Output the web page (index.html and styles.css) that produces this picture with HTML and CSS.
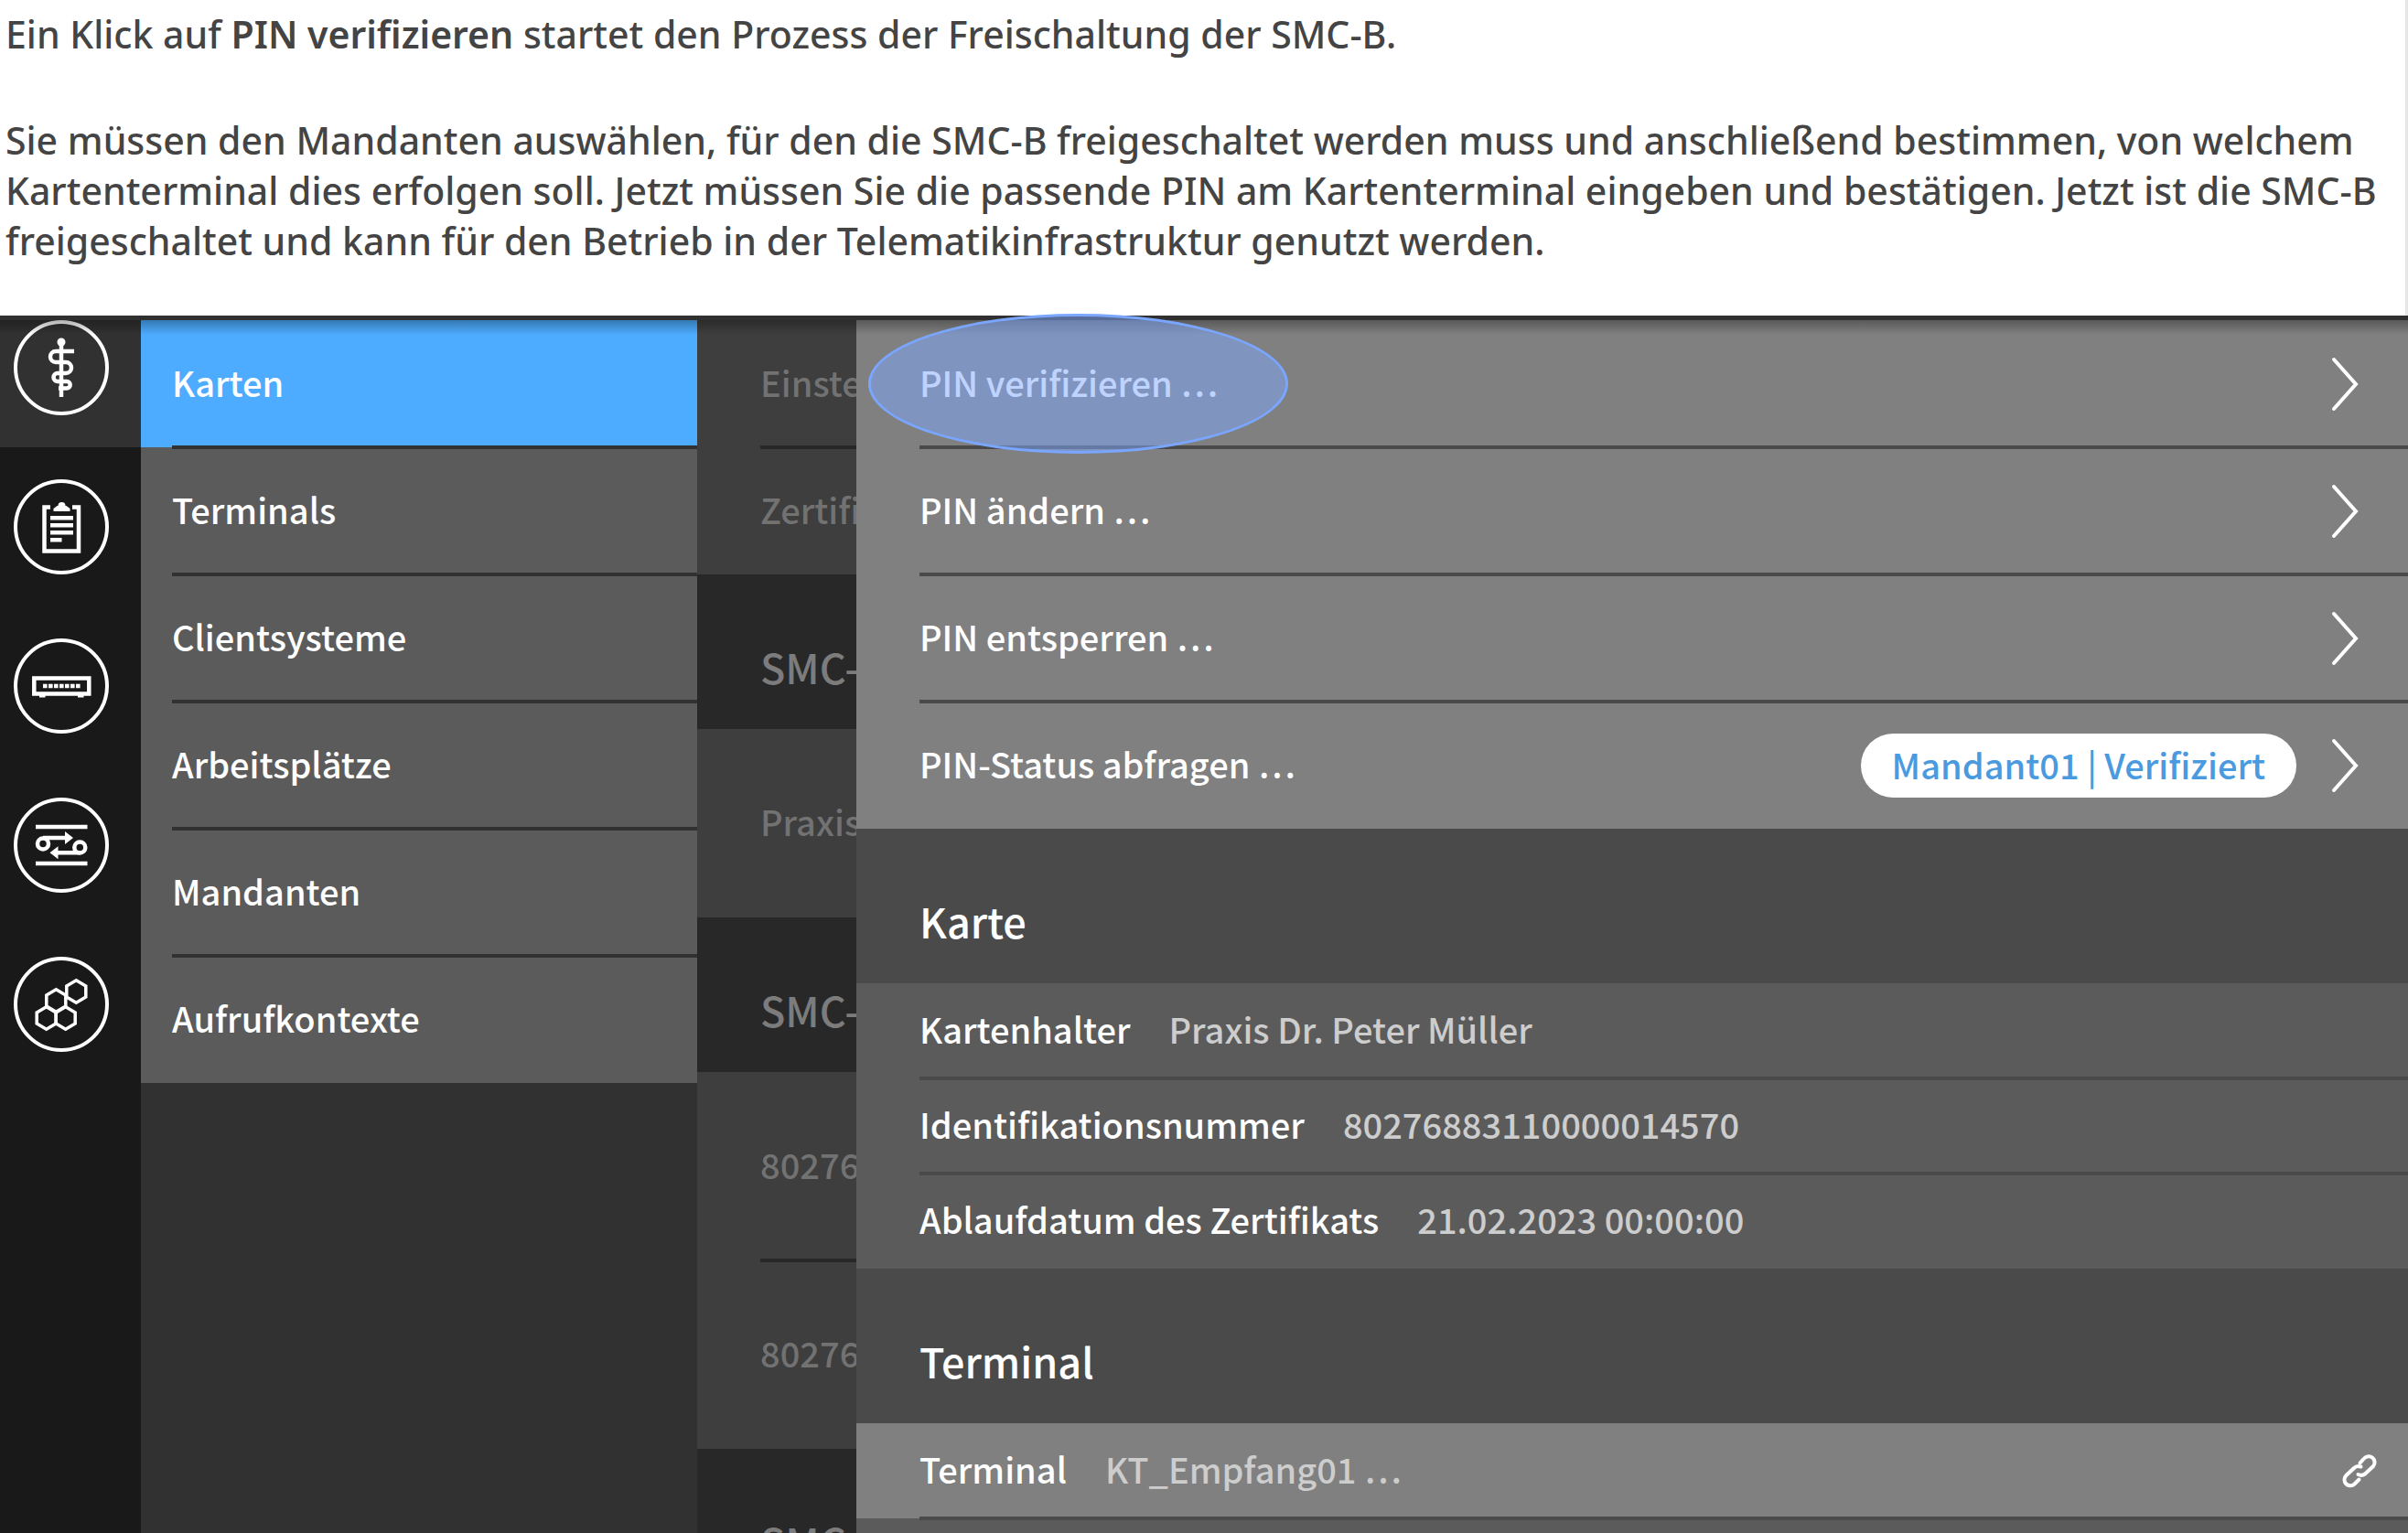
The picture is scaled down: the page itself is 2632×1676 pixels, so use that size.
FILE: index.html
```html
<!DOCTYPE html>
<html lang="de">
<head>
<meta charset="utf-8">
<title>PIN verifizieren</title>
<link rel="stylesheet" href="styles.css">
</head>
<body>
<section class="intro">
  <p>Ein Klick auf <strong>PIN verifizieren</strong> startet den Prozess der Freischaltung der SMC-B.</p>
  <p>Sie müssen den Mandanten auswählen, für den die SMC-B freigeschaltet werden muss und anschließend bestimmen, von welchem Kartenterminal dies erfolgen soll. Jetzt müssen Sie die passende PIN am Kartenterminal eingeben und bestätigen. Jetzt ist die SMC-B freigeschaltet und kann für den Betrieb in der Telematikinfrastruktur genutzt werden.</p>
</section>

<main class="app">
  <nav class="rail" aria-label="Bereiche">
    <a class="rail-item active" href="#praxis" aria-label="Praxis">
      <svg class="rail-icon" viewBox="0 0 104 104">
        <circle cx="52" cy="52" r="50"/>
        <g class="bold"><path d="M52 23V84"/><path d="M66 34H46a6 6 0 0 0 0 12H57a6 6 0 0 1 0 12H48a4.500 4.500 0 0 0 0 9H58a3.700 3.700 0 0 1 0 7.400H49"/></g>
        <circle class="solid" cx="52" cy="24" r="4.500"/>
      </svg>
    </a>
    <a class="rail-item" href="#protokoll" aria-label="Protokoll">
      <svg class="rail-icon" viewBox="0 0 104 104">
        <circle cx="52" cy="52" r="50"/>
        <g class="bold"><path d="M40 30.500H33.500V78.500H71V30.500H64"/><path d="M40 42.300H65M40 50.300H65M40 58.300H65M40 66.300H52.500"/></g>
        <path class="solid" d="M43.500 35v-3l4-3h1a4 4 0 0 1 8 0h1l4 3v3z"/>
      </svg>
    </a>
    <a class="rail-item" href="#system" aria-label="System">
      <svg class="rail-icon" viewBox="0 0 104 104">
        <circle cx="52" cy="52" r="50"/>
        <rect class="bold" x="22.300" y="43.500" width="60" height="17"/>
        <path class="bold" stroke-dasharray="4.600 1.400" d="M32 52H73.500"/>
        <path class="solid" d="M28 62h6.500v2.500h-6.500zM70 62h6.500v2.500h-6.500z"/>
      </svg>
    </a>
    <a class="rail-item" href="#netzwerk" aria-label="Netzwerk">
      <svg class="rail-icon" viewBox="0 0 104 104">
        <circle cx="52" cy="52" r="50"/>
        <g class="bold"><path d="M24 32H80.500M24 72H80.500M32 44H58M72.500 60.300H46"/><circle cx="32" cy="50.500" r="6"/><circle cx="72.300" cy="54.500" r="6"/></g>
        <path class="solid" d="M56 37l9 7-9 7zM48.500 53.300l-9 7 9 7z"/>
      </svg>
    </a>
    <a class="rail-item" href="#module" aria-label="Module">
      <svg class="rail-icon" viewBox="0 0 104 104">
        <circle cx="52" cy="52" r="50"/>
        <g class="cells"><path d="M68.300 25.800l10.500 6.100v12.200l-10.500 6.100-10.500-6.100v-12.200z"/><path d="M46.300 35.800l10.500 6.100v12.200l-10.500 6.100-10.500-6.100v-12.200z"/><path d="M35.700 54.800l10.500 6.100v12.200l-10.500 6.100-10.500-6.100v-12.200z"/><path d="M56.700 54.800l10.500 6.100v12.200l-10.500 6.100-10.500-6.100v-12.200z"/></g>
      </svg>
    </a>
  </nav>

  <nav class="menu" aria-label="Praxis">
    <a class="row tall active" href="#karten">Karten</a>
    <a class="row tall" href="#terminals">Terminals</a>
    <a class="row tall" href="#clientsysteme">Clientsysteme</a>
    <a class="row tall" href="#arbeitsplaetze">Arbeitsplätze</a>
    <a class="row tall" href="#mandanten">Mandanten</a>
    <a class="row tall" href="#aufrufkontexte">Aufrufkontexte</a>
  </nav>

  <section class="cards">
    <div class="row tall">Einste</div>
    <div class="row tall">Zertifi</div>
    <h2 class="head">SMC-</h2>
    <div class="row double">Praxis</div>
    <h2 class="head">SMC-</h2>
    <div class="row double">80276</div>
    <div class="row double">80276</div>
    <h2 class="head">SMC-</h2>
  </section>

  <section class="detail">
    <div class="actions">
      <button class="row tall" type="button">PIN verifizieren …
        <svg class="chevron" viewBox="0 0 30 60"><path d="M3 3L27 30L3 57"/></svg>
        <span class="marker"></span>
      </button>
      <button class="row tall" type="button">PIN ändern …
        <svg class="chevron" viewBox="0 0 30 60"><path d="M3 3L27 30L3 57"/></svg>
      </button>
      <button class="row tall" type="button">PIN entsperren …
        <svg class="chevron" viewBox="0 0 30 60"><path d="M3 3L27 30L3 57"/></svg>
      </button>
      <button class="row tall" type="button">PIN-Status abfragen …
        <span class="badge">Mandant01 | Verifiziert</span>
        <svg class="chevron" viewBox="0 0 30 60"><path d="M3 3L27 30L3 57"/></svg>
      </button>
    </div>
    <h2 class="head">Karte</h2>
    <dl class="facts">
      <div class="row"><dt>Kartenhalter</dt><dd>Praxis Dr. Peter Müller</dd></div>
      <div class="row"><dt>Identifikationsnummer</dt><dd>80276883110000014570</dd></div>
      <div class="row"><dt>Ablaufdatum des Zertifikats</dt><dd>21.02.2023 00:00:00</dd></div>
    </dl>
    <h2 class="head">Terminal</h2>
    <dl class="facts">
      <div class="row linked"><dt>Terminal</dt><dd>KT_Empfang01 …</dd>
        <svg class="link" viewBox="0 0 38 38"><path d="M19.500 10.500L24 5.500A6.500 6.500 0 0 1 34 14L25 22.500Q21.500 25 17.500 23"/><path d="M20.500 14.500Q16 13 13 16L4.500 24A6.500 6.500 0 0 0 13.500 33.500L18.500 28.500"/></svg>
      </div>
      <div class="row"></div>
    </dl>
  </section>
</main>
</body>
</html>
```
FILE: styles.css
```css
* { box-sizing: border-box; }

body {
  margin: 0;
  height: 100vh;
  overflow: hidden;
  display: flex;
  flex-direction: column;
  background: #fff;
}

.intro {
  flex: none;
  padding: 10px 6px 54px;
  border-right: 3px solid #e6e6e6;
  color: #444;
  font: 500 41px/55px "Noto Sans", sans-serif;
}
.intro p { margin: 0; }
.intro p + p { margin-top: 61px; }
.intro strong { font-weight: 600; }

.app {
  position: relative;
  flex: 1;
  min-height: 0;
  display: grid;
  grid-template-columns: 154px 608px 174px 1fr;
  border-top: 5px solid #303030;
  background: #191919;
  color: #fff;
  font: 500 38px/56px "Noto Sans CJK SC", sans-serif;
}
/* soft shadow under the top edge */
.app::after {
  content: "";
  position: absolute;
  inset: 0 0 auto;
  height: 16px;
  background: linear-gradient(rgba(0, 0, 0, .3), rgba(0, 0, 0, 0));
  pointer-events: none;
}

.rail-item {
  display: flex;
  align-items: center;
  height: 174px;
  padding-left: 15px;
}
.rail-item.active {
  align-items: flex-start;
  height: 139px;
  background: #313131;
}
.rail-icon {
  width: 104px;
  height: 104px;
  fill: none;
  stroke: #fff;
  stroke-width: 4;
}
.rail-icon .bold { stroke-width: 4.5; }
.rail-icon .cells { stroke-width: 3.5; }
.rail-icon .solid { fill: #fff; stroke: none; }

.row {
  position: relative;
  display: flex;
  align-items: center;
  width: 100%;
  height: 104px;
  padding: 0 0 4px 69px;
  border: 0;
  background: #5b5b5b;
  color: inherit;
  font: inherit;
  text-align: left;
  text-decoration: none;
  white-space: nowrap;
}
.row.tall { height: 139px; }
.row.double { height: 206px; }
.row + .row::before {
  content: "";
  position: absolute;
  top: -2px;
  right: 0;
  left: 69px;
  height: 4px;
  background: #4a4a4a;
}

.head {
  height: 169px;
  margin: 0;
  padding: 34px 0 0 69px;
  font-size: 45px;
  font-weight: 500;
  line-height: 134px;
}

.menu { background: #313131; }
.menu .row { padding-left: 34px; }
.menu .row + .row::before { left: 34px; background: #313131; }
.menu .row.active { background: #4dacff; }

.cards {
  overflow: hidden;
  background: #282828;
  color: #7c7c7c;
}
.cards .row { background: #3e3e3e; color: #727272; }
.cards .row + .row::before { background: #282828; }

.detail { background: #4a4a4a; }
.actions .row,
.row.linked { background: #808080; }
.actions .row { padding-right: 54px; }
.row.linked { padding-right: 34px; }
.facts { margin: 0; }
.facts dd { margin: 0 0 0 42px; color: #cdcdcd; }

.chevron,
.link {
  flex: none;
  margin: 4px 0 0 auto;
  fill: none;
  stroke: #fff;
  stroke-width: 4;
  stroke-linecap: round;
}
.chevron { width: 30px; height: 60px; }
.link { width: 38px; height: 38px; }

.badge {
  margin: 4px 0 0 auto;
  padding: 6px 34px 8px;
  border-radius: 35px;
  background: #fff;
  color: #4a9ae0;
}
.badge + .chevron { margin-left: 38px; }

/* highlight ellipse drawn over the first action */
.marker {
  position: absolute;
  z-index: 1;
  top: -7px;
  left: 13px;
  width: 459px;
  height: 153px;
  border: 3px solid #7aa6ff;
  border-radius: 50%;
  background: rgba(128, 168, 255, .5);
}
```
